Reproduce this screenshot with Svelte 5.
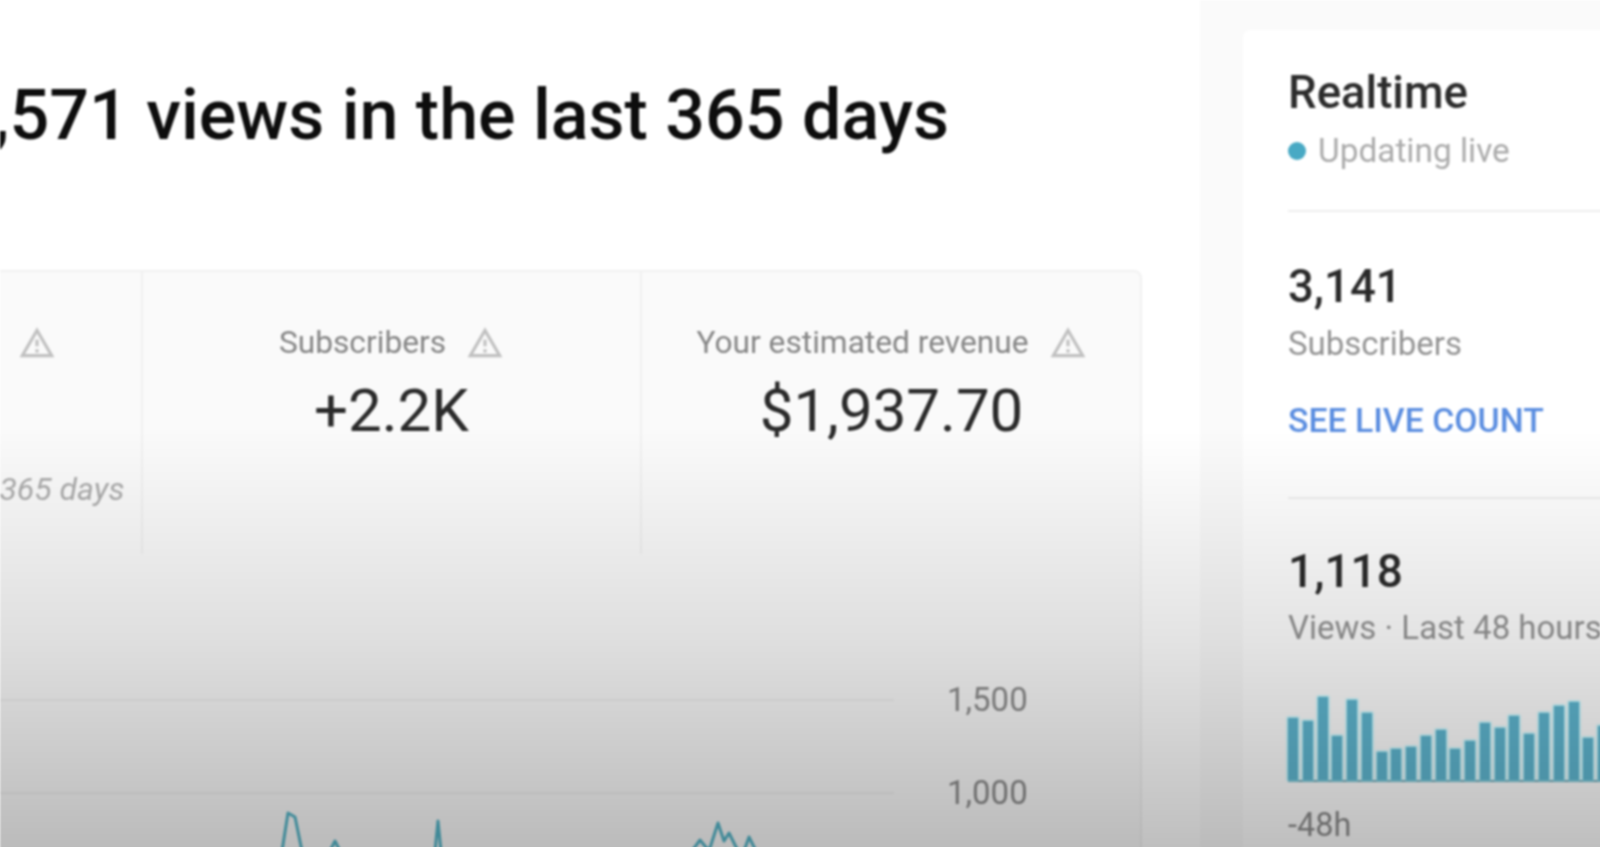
<script>
  const bars = [62, 59, 83, 44, 80, 67, 28, 31, 33, 44, 50, 31, 39, 57, 52, 64, 46, 67, 74, 78, 42, 54];
  const tabs = [
    { label: "Watch time (hours)", value: "", note: "About the same as prior 365 days" },
    { label: "Subscribers", value: "+2.2K", note: "" },
    { label: "Your estimated revenue", value: "$1,937.70", note: "" }
  ];
  const ticks = ["1,500", "1,000"];
</script>

<div class="frame">
  <div class="page">
    <main>
      <h1>1,571 views in the last 365 days</h1>

      <section class="card">
        <div class="tabs">
          {#each tabs as tab}
            <div class="tab">
              <div class="label">
                <span>{tab.label}</span>
                <svg viewBox="0 0 24 24" width="38" height="38">
                  <path fill="#c0c0c0" d="M12 5.99L19.53 19H4.47L12 5.99M12 2L1 21h22L12 2zm1 14h-2v2h2v-2zm0-6h-2v4h2v-4z" />
                </svg>
              </div>
              <div class="value">{tab.value}</div>
              <div class="note">{tab.note}</div>
            </div>
          {/each}
        </div>

        <div class="chart">
          {#each ticks as tick}
            <div class="row">
              <div class="line"></div>
              <span>{tick}</span>
            </div>
          {/each}
          <svg class="plot" width="900" height="60" viewBox="0 790 900 60">
            <g fill="none" stroke="#55b5c8" stroke-width="3" stroke-linejoin="round">
              <polyline points="282,850 288,812 295,816 302,850" />
              <polyline points="330,850 335,840 340,850" />
              <polyline points="435,850 438,820 441,850" />
              <polyline points="692,850 700,839 709,850 718,822 724,840 729,832 738,850" />
              <polyline points="744,850 749,836 756,850" />
            </g>
          </svg>
        </div>
      </section>
    </main>

    <aside>
      <div class="panel">
        <div class="block head">
          <h2>Realtime</h2>
          <div class="live"><i></i>Updating live</div>
        </div>
        <div class="block count">
          <div class="num">3,141</div>
          <div class="sub">Subscribers</div>
          <div class="link">SEE LIVE COUNT</div>
        </div>
        <div class="block views">
          <div class="num big">1,118</div>
          <div class="sub">Views · Last 48 hours</div>
          <div class="bars">
            {#each bars as h}
              <div class="bar" style="height: {h}px"></div>
            {/each}
          </div>
          <div class="axis">-48h</div>
        </div>
      </div>
    </aside>

    <div class="shade"></div>
  </div>
</div>

<style>
  :global(body) {
    margin: 0;
    background: #fff;
  }

  .frame {
    width: 1600px;
    height: 847px;
    overflow: hidden;
  }

  /* a little taller and wider than the frame so the blur has no soft edge */
  .page {
    position: relative;
    display: flex;
    width: 1606px;
    height: 853px;
    font-family: Roboto, "Liberation Sans", sans-serif;
    filter: blur(0.8px);
    overflow: hidden;
  }

  main {
    flex: 0 0 1200px;
    min-width: 0;
    background: #fff;
  }

  h1 {
    margin: 71px 0 0 -46px;
    font-size: 70px;
    line-height: 88px;
    font-weight: 500;
    color: #0d0d0d;
    white-space: nowrap;
  }

  .card {
    width: 1500px;
    height: 640px;
    margin: 111px 0 0 -358px;
    border: 2px solid #f1f1f1;
    border-radius: 8px;
    box-sizing: border-box;
    background: #fafafa;
  }

  .tabs {
    display: flex;
    height: 282px;
  }

  .tab {
    flex: 0 0 499px;
    box-sizing: border-box;
    padding-top: 48px;
    border-right: 2px solid #f0f0f0;
    text-align: center;
  }

  .tab:last-child {
    border-right: 0;
  }

  .label {
    display: flex;
    justify-content: center;
    align-items: center;
    gap: 20px;
    height: 44px;
    font-size: 31.7px;
    color: #858585;
    white-space: nowrap;
  }

  .label svg {
    flex: none;
    margin-top: 2px;
  }

  .value {
    height: 74px;
    margin-top: 10px;
    font-size: 60px;
    line-height: 74px;
    color: #2a2a2a;
  }

  .note {
    margin-top: 22px;
    font-size: 32px;
    font-style: italic;
    color: #ababab;
    white-space: nowrap;
  }

  .chart {
    position: relative;
    padding-top: 99px;
  }

  .row {
    display: flex;
    align-items: center;
    height: 93px;
  }

  .line {
    flex: 0 0 1250px;
    height: 2px;
    background: #efefef;
  }

  .row span {
    margin-left: 53px;
    font-size: 33px;
    color: #8c8c8c;
  }

  .plot {
    position: absolute;
    left: 356px;
    top: 237px;
    overflow: visible;
  }

  aside {
    flex: 1;
    min-width: 0;
    padding: 30px 0 0 43px;
    background: #fafafa;
  }

  .panel {
    height: 823px;
    border-radius: 8px 0 0 0;
    background: #fff;
    padding-left: 45px;
  }

  .block {
    border-bottom: 2px solid #eee;
  }

  .block:last-child {
    border-bottom: 0;
  }

  .head {
    height: 182px;
    box-sizing: border-box;
    padding-top: 32px;
  }

  h2 {
    margin: 0;
    font-size: 45.5px;
    line-height: 62px;
    font-weight: 500;
    color: #2c2c2c;
  }

  .live {
    display: flex;
    align-items: center;
    margin-top: 5px;
    font-size: 33.4px;
    line-height: 44px;
    color: #ababab;
  }

  .live i {
    width: 18px;
    height: 18px;
    margin-right: 12px;
    border-radius: 50%;
    background: #48a9c4;
  }

  .count {
    height: 287px;
    box-sizing: border-box;
    padding-top: 44px;
  }

  .num {
    font-size: 45.5px;
    line-height: 62px;
    font-weight: 500;
    color: #2a2a2a;
  }

  .big {
    font-size: 46px;
  }

  .sub {
    margin-top: 1.5px;
    font-size: 33px;
    line-height: 48px;
    color: #949494;
    white-space: nowrap;
  }

  .link {
    margin-top: 31px;
    font-size: 33.8px;
    line-height: 44px;
    font-weight: 500;
    color: #5a8de0;
    white-space: nowrap;
  }

  .views {
    padding-top: 41px;
  }

  .bars {
    display: flex;
    align-items: flex-end;
    gap: 4.77px;
    height: 85px;
    margin-top: 43.5px;
    border-bottom: 2px solid #6aa3b4;
  }

  .bar {
    flex: 0 0 10px;
    background: #60b8d2;
    box-shadow: 0 0 2px 1px #96f0ff;
  }

  .axis {
    margin-top: 25px;
    font-size: 32.5px;
    line-height: 36px;
    color: #8c8c8c;
  }

  .shade {
    position: absolute;
    inset: 0;
    pointer-events: none;
    background: linear-gradient(to bottom, rgba(0, 0, 0, 0) 0, rgba(0, 0, 0, 0) 430px, rgba(0, 0, 0, 0.11) 640px, rgba(0, 0, 0, 0.25) 847px);
  }
</style>
